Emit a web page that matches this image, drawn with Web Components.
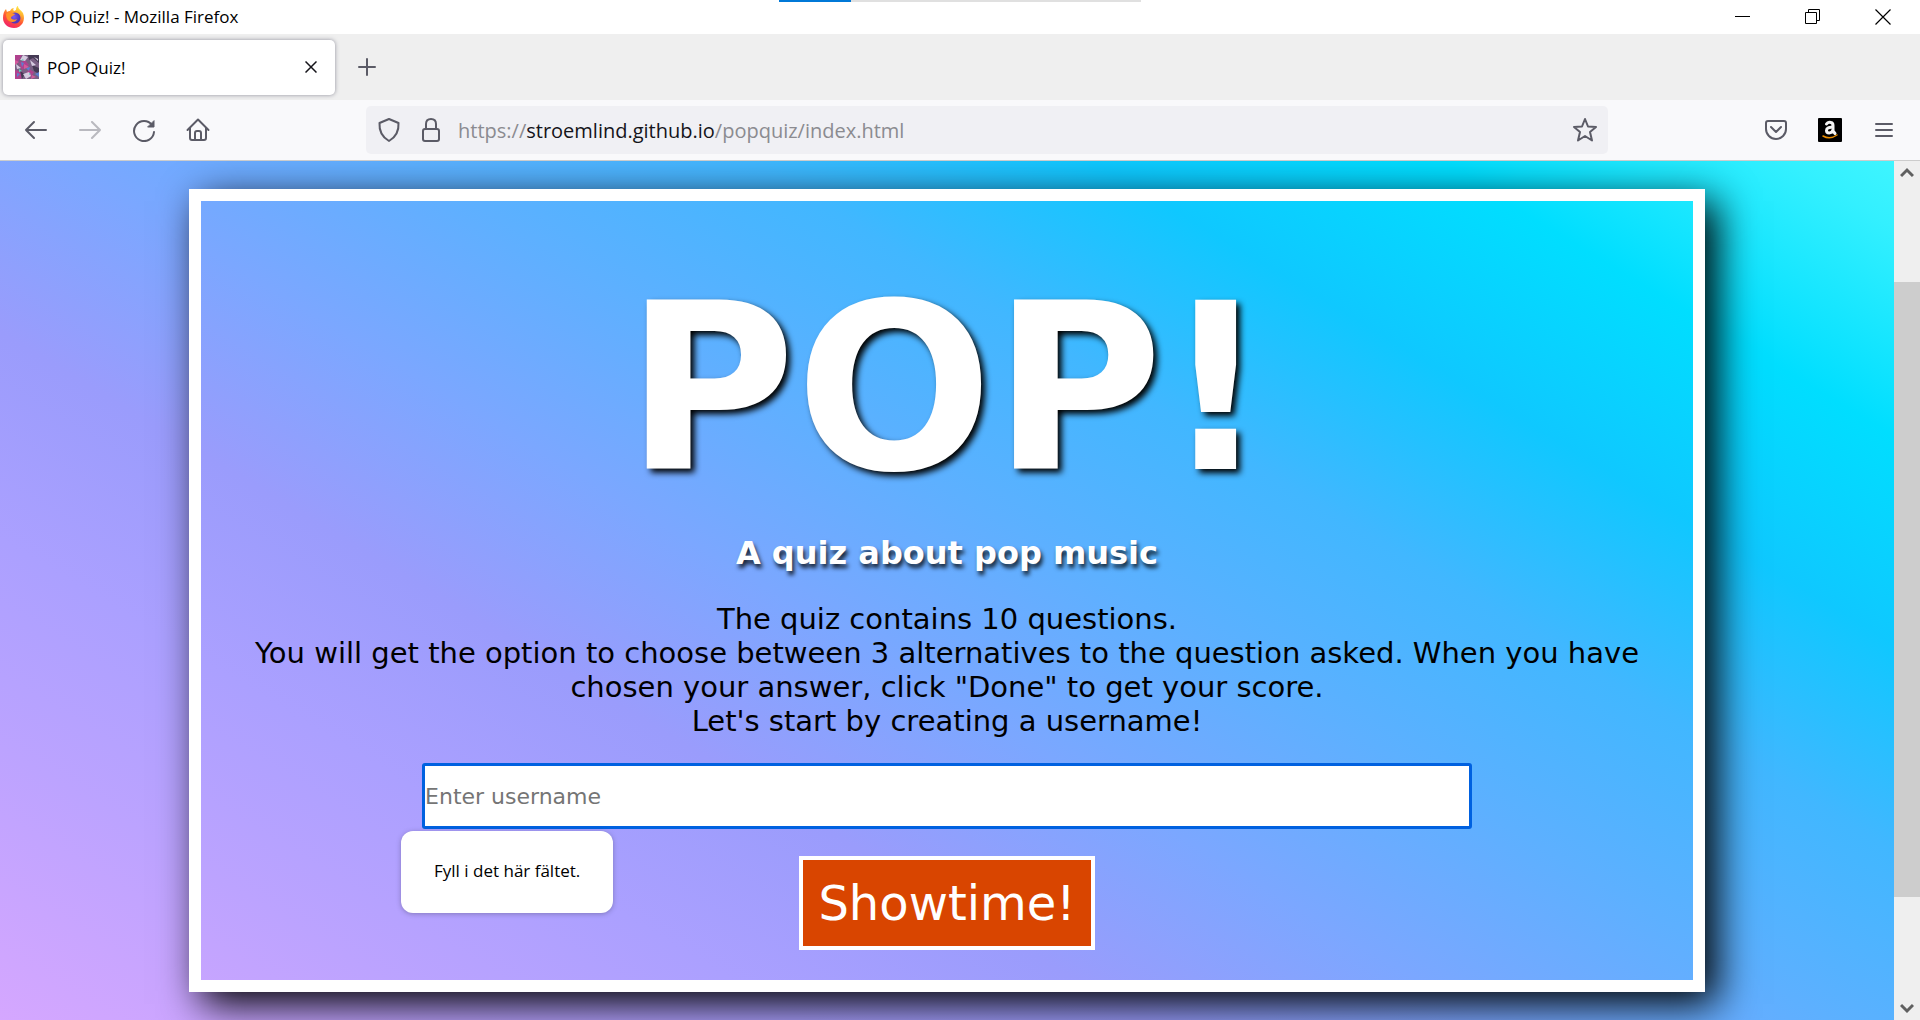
<!DOCTYPE html>
<html lang="sv">
<head>
<meta charset="utf-8">
<title>POP Quiz!</title>
<style>
html, body { height: 100%; margin: 0; }
body { overflow: hidden; font-family: "Open Sans", "Noto Sans", sans-serif; color: #000; }
</style>
</head>
<body>
<browser-window>
  <title-bar slot="title">POP Quiz! - Mozilla Firefox</title-bar>
  <tab-strip slot="tabs">POP Quiz!</tab-strip>
  <nav-bar slot="nav"><span slot="scheme">https://</span><span slot="host">stroemlind.github.io</span><span slot="path">/popquiz/index.html</span></nav-bar>
  <quiz-page>
    <quiz-card>
      <span slot="name">POP!</span>
      <span slot="tagline">A quiz about pop music</span>
      <quiz-intro slot="intro"></quiz-intro>
      <user-form slot="form"></user-form>
    </quiz-card>
  </quiz-page>
  <page-scrollbar slot="scroll"></page-scrollbar>
</browser-window>

<script>
const define = (name, html) => {
  const template = document.createElement('template');
  template.innerHTML = html;
  customElements.define(name, class extends HTMLElement {
    constructor() {
      super();
      this.attachShadow({ mode: 'open' }).append(template.content.cloneNode(true));
    }
  });
};

const buttonReset = `button{appearance:none;border:0;background:none;padding:0;margin:0;font:inherit;color:inherit;display:flex;align-items:center;justify-content:center}svg{display:block}`;

define('browser-window', `
<style>
:host{display:flex;flex-direction:column;height:100vh;background:#fff}
.view{display:flex;flex:1;min-height:0}
</style>
<slot name="title"></slot><slot name="tabs"></slot><slot name="nav"></slot>
<div class="view"><slot></slot><slot name="scroll"></slot></div>`);

define('title-bar', `
<style>${buttonReset}
:host{display:flex;align-items:center;height:34px;padding:0 2px;background:#fff;font-size:17px;position:relative}
.name{flex:1;padding-left:5px;line-height:24px}
.controls{display:flex}
.controls button{width:70px;height:34px}
.load{position:absolute;top:0;left:0;right:0;display:flex;justify-content:center}
.load i{height:2px;background:#0078d7;width:72px}
.load i+i{background:#e0e0e0;width:290px}
</style>
<div class="load"><i></i><i></i></div>
<svg width="24" height="24" viewBox="0 0 24 24">
<defs>
<linearGradient id="f" x1=".8" y1="0" x2=".3" y2="1"><stop offset="0" stop-color="#fff44f"/><stop offset=".3" stop-color="#ffb02e"/><stop offset=".6" stop-color="#ff5634"/><stop offset="1" stop-color="#f0206b"/></linearGradient>
<radialGradient id="g" cx=".4" cy=".4"><stop offset="0" stop-color="#7a5cf5"/><stop offset="1" stop-color="#5136b8"/></radialGradient>
</defs>
<path fill="url(#f)" d="M1 13C1 9 2 6 4 4l1 3c1-1 2-1 3-1 1-2 2-3 4-3-1 1-1 2 0 3l2-1C14 3 15 1 16 1c0 3 3 4 5 7 3 7-1 15-9 15C6 23 1 19 1 13Z"/>
<circle cx="13" cy="13" r="5.500" fill="url(#g)"/>
<path fill="#ff9328" d="M4 9c2-2 5-2 6-1l3 1c-1 2-4 2-4 4 1 2 4 2 6 1-1 3-5 4-8 2-2-1-3-4-3-7Z"/>
</svg>
<span class="name"><slot></slot></span>
<div class="controls">
<button aria-label="Minimera"><svg width="16" height="16" fill="none" stroke="#000"><path d="M0 7.500h15"/></svg></button>
<button aria-label="Återställ"><svg width="16" height="16" fill="none" stroke="#000"><path d="M.5 3.500h11v11H.5zM3.500 3V.5h11v11H12"/></svg></button>
<button aria-label="Stäng"><svg width="16" height="16" fill="none" stroke="#000" stroke-width="1.200"><path d="M.5.5l15 15M15.500.5l-15 15"/></svg></button>
</div>`);

define('tab-strip', `
<style>${buttonReset}
:host{display:flex;align-items:center;height:66px;background:#efefef;font-size:17px;padding-left:3px;gap:12px}
.tab{display:flex;align-items:center;box-sizing:border-box;width:332px;height:55px;padding:0 12px;background:#fff;border-radius:5px;box-shadow:0 0 4px rgba(80,80,100,.6)}
.name{flex:1;padding:2px 0 0 8px;line-height:24px}
.tab button{width:24px;height:24px}
.add{width:40px;height:40px}
</style>
<div class="tab">
<svg width="24" height="24" viewBox="0 0 24 24">
<rect width="24" height="24" fill="#7a6084"/>
<path fill="#b0428e" d="M0 0h7L3 7H0zM4 8l6-3 4 5-7 5zM0 15l8 2-2 7H0zM14 14l5 3-3 5-6-2z"/>
<path fill="#453a54" d="M13 0h11v8l-6-5-4 2zM17 10l7 3v6l-5-3zM5 16l5 3-3 5z"/>
<path fill="#d6cbe0" d="M8 0l5 2-3 4-5-1zM15 5l6 5-4 1zM1 9l5 4-4 1zM8 19l6-2 2 4-5 3zM19 2l4 2v2z"/>
<path fill="#5e7fd0" d="M6 7l3 1-2 4zM11 13l4-1-1 4zM2 18l3 1-3 3zM20 19l4-2v5z"/>
<path fill="#d45a9d" d="M9 9l5 3-5 2zM0 5l4 2-4 3zM17 20l4 2-5 2z"/>
<path fill="#62cfc0" d="M7 4l2 1-2 1zM4 14l3 2-3 1zM14 18l2 1-2 1z"/>
</svg>
<span class="name"><slot></slot></span>
<button aria-label="Stäng flik"><svg width="12" height="12" fill="none" stroke="#15141a" stroke-width="1.500"><path d="M.5.5l11 11M11.500.5l-11 11"/></svg></button>
</div>
<button class="add" aria-label="Ny flik"><svg width="18" height="18" fill="none" stroke="#5b5b66" stroke-width="2" stroke-linecap="round"><path d="M9 1v16M1 9h16"/></svg></button>`);

define('nav-bar', `
<style>${buttonReset}
:host{display:flex;align-items:center;justify-content:space-between;height:60px;background:#f9f9fb;border-bottom:1px solid #ccc;font-size:20px}
svg{fill:none;stroke:#5b5b66;stroke-width:2;stroke-linecap:round;stroke-linejoin:round}
.group{display:flex;box-sizing:border-box}
.left{width:366px;padding-left:9px}
.right{width:312px;justify-content:flex-end;padding-right:9px}
.group button{width:54px;height:48px}
.field{flex:1;display:flex;align-items:center;height:48px;background:#f0f0f4;border-radius:5px;padding:0 2px}
.field button{width:42px;height:48px}
.url{flex:1;padding:2px 0 0 6px;color:#8b8b90;line-height:30px;outline:0;white-space:nowrap}
.url b{font-weight:400;color:#15141a}
</style>
<div class="group left">
<button aria-label="Tillbaka"><svg width="24" height="24"><path d="M2 12h20M10 4l-8 8 8 8"/></svg></button>
<button aria-label="Framåt"><svg width="24" height="24" style="opacity:.4"><path d="M2 12h20M14 4l8 8-8 8"/></svg></button>
<button aria-label="Ladda om"><svg width="24" height="24"><path d="M20 7a10 10 0 1 0 2 7"/><path fill="#5b5b66" stroke-width="1" d="M22 3v6h-6z"/></svg></button>
<button aria-label="Hem"><svg width="24" height="24"><path d="M1.500 12 12 1.500 22.500 12M4 10v10q0 2 2 2h12q2 0 2-2V10M9 22v-7q0-2 2-2h2q2 0 2 2v7"/></svg></button>
</div>
<div class="field">
<button aria-label="Skydd"><svg width="24" height="26"><path d="M12 2l9.500 4C22 14 19 20 12 24 5 20 2 14 2.500 6z"/></svg></button>
<button aria-label="Anslutning"><svg width="20" height="26"><rect x="2" y="12" width="16" height="12" rx="2"/><path d="M5 12V7q0-5 5-5t5 5v5"/></svg></button>
<div class="url" role="textbox" contenteditable="true" spellcheck="false" aria-label="Adress"><slot name="scheme"></slot><b><slot name="host"></slot></b><slot name="path"></slot></div>
<button aria-label="Bokmärk"><svg width="26" height="26"><path d="M13 2l3 7.500 8 .5-6 5 2 8.500-7-4.500-7 4.500L8 15l-6-5 8-.5z"/></svg></button>
</div>
<div class="group right">
<button aria-label="Pocket"><svg width="24" height="24"><path d="M4 3h16q2 0 2 2v6a10 10 0 0 1-20 0V5q0-2 2-2zM7 9l5 5 5-5"/></svg></button>
<button aria-label="Amazon"><svg width="24" height="24" style="stroke:none"><rect width="24" height="24" rx="1" fill="#000"/>
<path stroke="#f5f5f5" stroke-width="3" d="M8.500 6Q10 3.500 13 4.500q2 .5 2 3V13l2 2.500M15 9.500c-4-.5-6.500.5-6.500 3 0 3 5 3.500 6.500-.5"/>
<path stroke="#e88b00" stroke-width="1.500" d="M5 18q7 4 14-1"/></svg></button>
<button aria-label="Meny"><svg width="20" height="20"><path d="M2 4h16M2 10h16M2 16h16"/></svg></button>
</div>`);

define('page-scrollbar', `
<style>${buttonReset}
:host{display:flex;flex-direction:column;width:26px;background:#efefef}
button{height:24px}
.track{flex:1;display:flex;flex-direction:column}
.before{flex:97}.thumb{flex:615;background:#cdcdcd}.after{flex:99}
</style>
<button aria-label="Upp"><svg width="14" height="12" fill="none" stroke="#606060" stroke-width="3"><path d="M1 9l6-6 6 6"/></svg></button>
<div class="track"><div class="before"></div><div class="thumb"></div><div class="after"></div></div>
<button aria-label="Ned"><svg width="14" height="12" fill="none" stroke="#606060" stroke-width="3"><path d="M1 3l6 6 6-6"/></svg></button>`);

/* The view shows the middle of a taller page, so the gradient runs past both its edges. */
define('quiz-page', `
<style>
:host{display:block;flex:1;min-width:0;overflow:hidden;padding-top:28px;
background:linear-gradient(to right top,#e2a9ff,#cfa6ff,#bca3ff,#aba0ff,#9a9cfc,#7ba7ff,#5db0ff,#41b7ff,#0fc8ff,#00deff,#33f0ff,#55ffff) 0 -140px / 100% calc(100% + 282px) no-repeat}
</style>
<slot></slot>`);

define('quiz-card', `
<style>
:host{display:flex;flex-direction:column;align-items:center;box-sizing:border-box;width:80%;margin:0 auto;border:12px solid #fff;box-shadow:12px 12px 38px #000;padding:58px 40px 30px;text-align:center;font-family:"DejaVu Sans",sans-serif}
h1,h2{margin:0;color:#fff;font-weight:700}
h1{font-size:232px;line-height:260px;text-shadow:4px 4px 6px #000}
h2{font-size:32px;line-height:34px;margin-top:17px;text-shadow:2px 4px 4px rgba(0,0,0,.8)}
</style>
<h1><slot name="name"></slot></h1>
<h2><slot name="tagline"></slot></h2>
<slot name="intro"></slot>
<slot name="form"></slot>`);

define('quiz-intro', `
<style>
:host{display:block;margin-top:32px}
p{margin:0;font-size:29px;line-height:34px}
</style>
<p>The quiz contains 10 questions.<br>You will get the option to choose between 3 alternatives to the question asked. When you have chosen your answer, click "Done" to get your score.<br>Let's start by creating a username!</p>`);

define('user-form', `
<style>
:host{display:block;width:100%;margin-top:25px}
form{display:flex;flex-direction:column;align-items:center;gap:27px;margin:0}
.entry{position:relative;width:74.4%}
input{display:block;box-sizing:border-box;width:100%;height:66px;border:3px solid #0061e0;border-radius:3px;background:#fff;padding:0;font:22px "DejaVu Sans",sans-serif;outline:0}
input::placeholder{color:#757575;opacity:1}
.tip{position:absolute;left:-21px;top:68px;box-sizing:border-box;padding:27px 33px 29px;background:#fff;border-radius:12px;box-shadow:0 1px 5px rgba(60,60,90,.4);font:17px/26px "Open Sans","Noto Sans",sans-serif;white-space:nowrap}
.go{box-sizing:border-box;height:94px;padding:0 15px;border:4px solid #fff;background:#d94500;color:#fff;font:48px "DejaVu Sans",sans-serif}
</style>
<form onsubmit="return false">
<div class="entry">
<label for="user"><input id="user" type="text" placeholder="Enter username" aria-label="Enter username" required></label>
<div class="tip" role="alert">Fyll i det här fältet.</div>
</div>
<button class="go">Showtime!</button>
</form>`);
</script>
</body>
</html>
